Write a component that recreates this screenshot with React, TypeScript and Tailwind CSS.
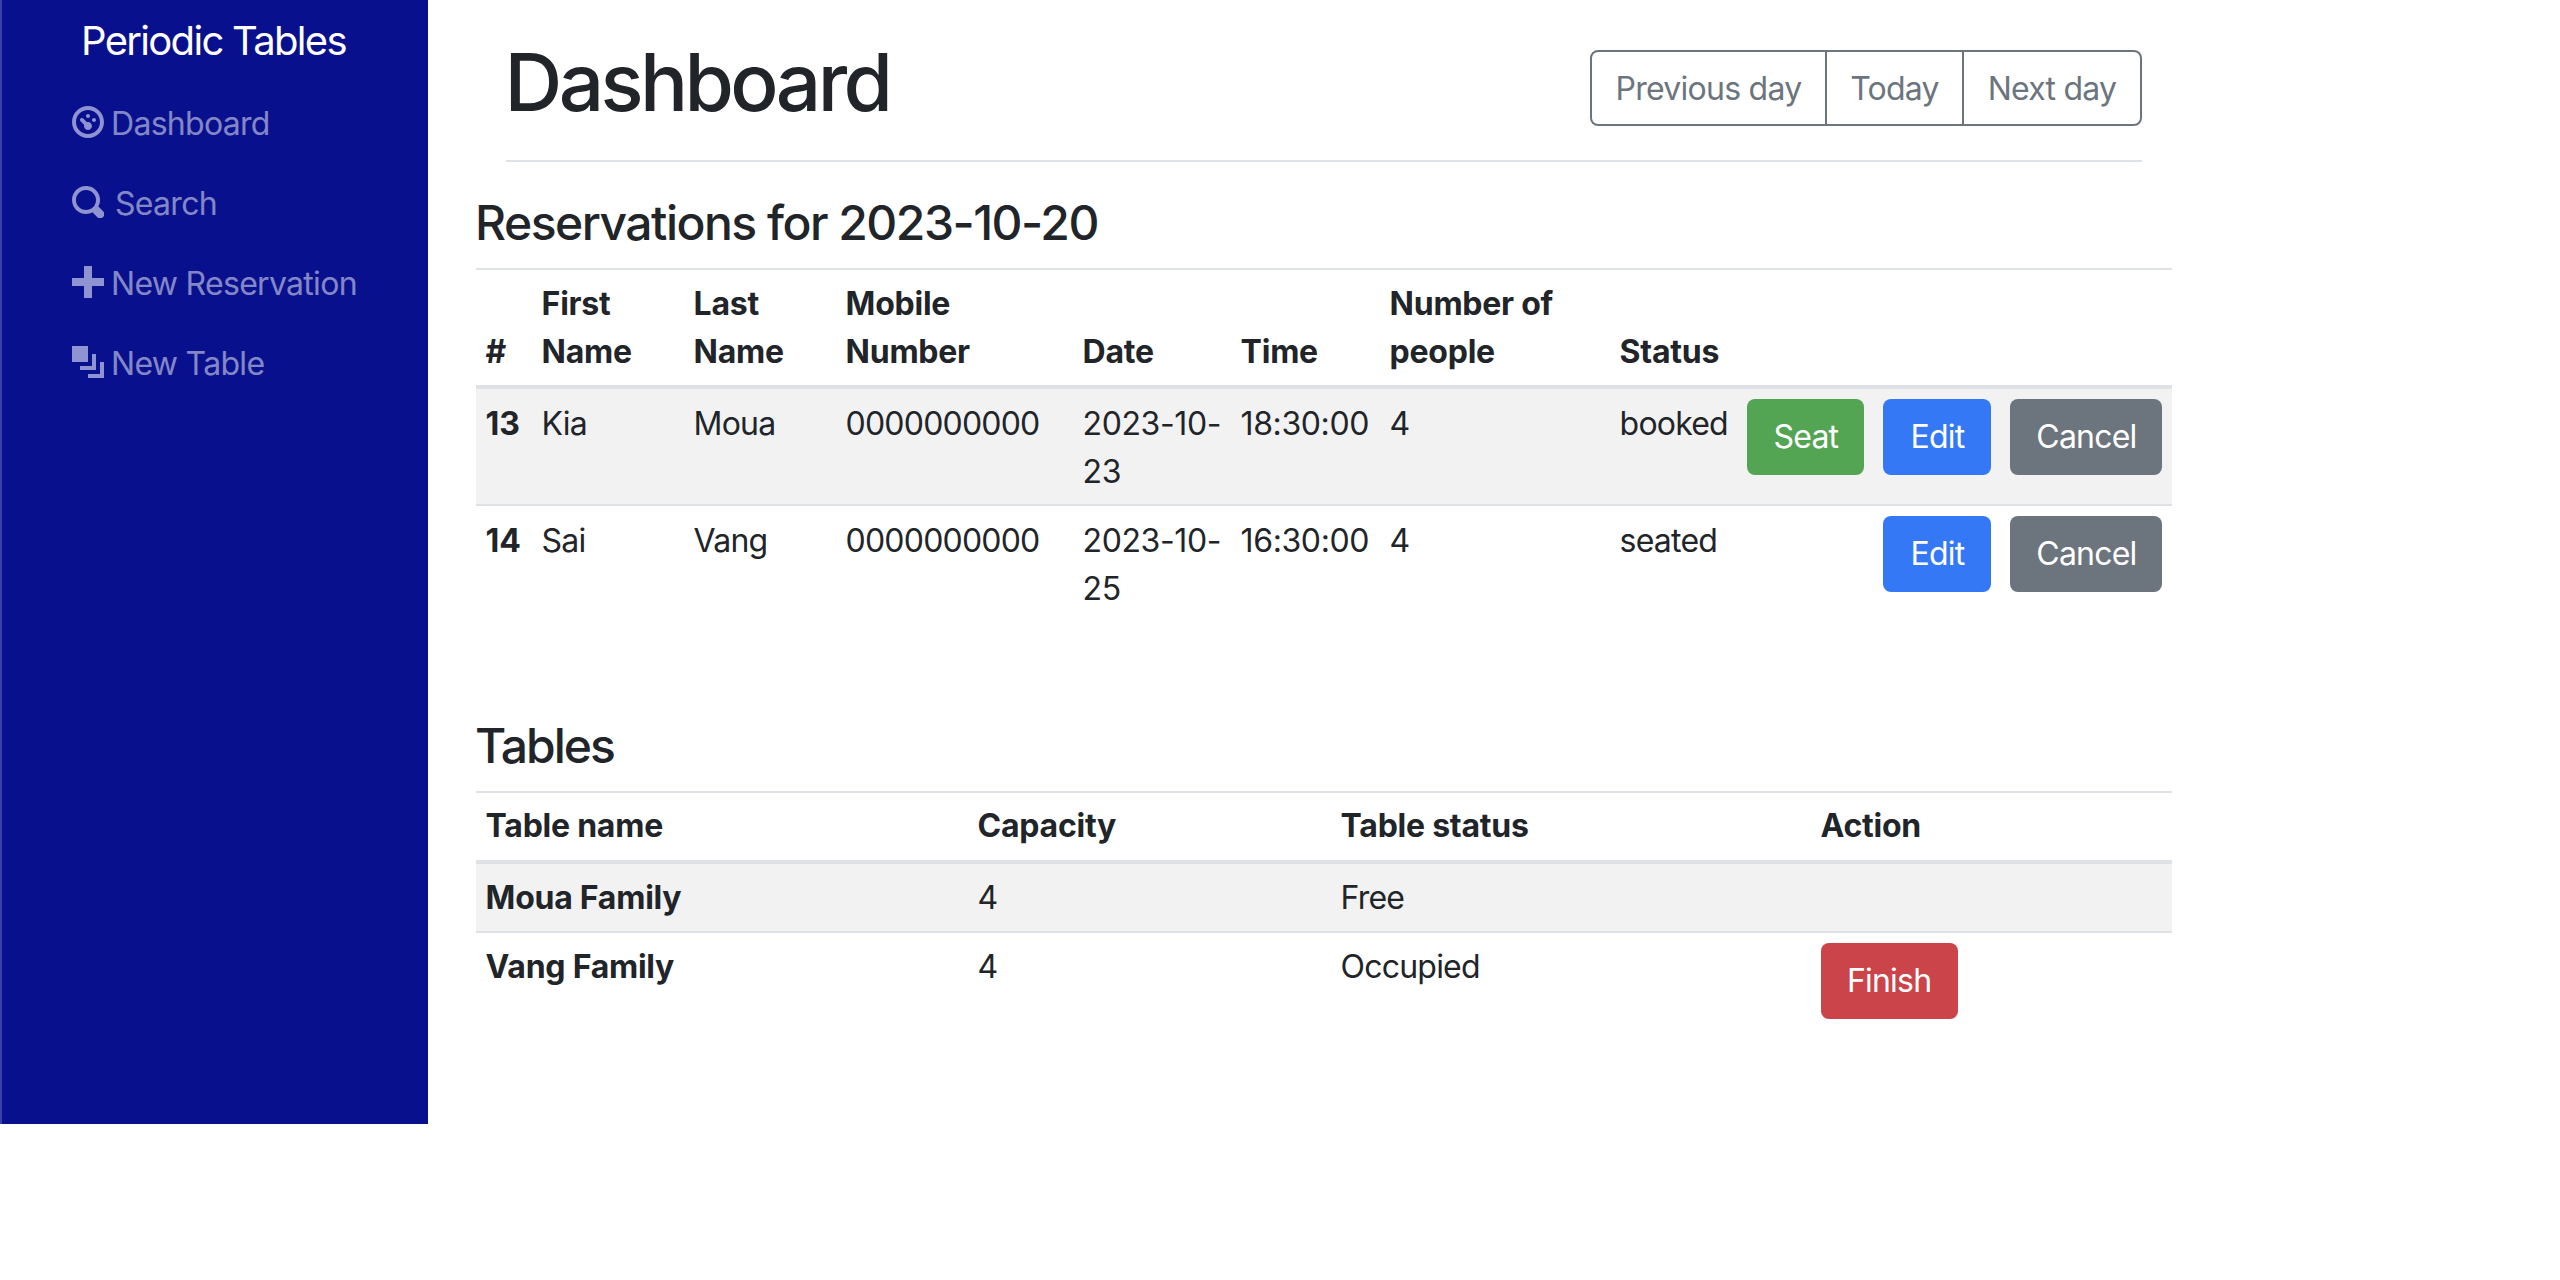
const nav = [
  { label: "Dashboard", textPad: "ml-[7px]", d: "M4 0c-2.2 0-4 1.8-4 4s1.8 4 4 4 4-1.8 4-4-1.8-4-4-4zm0 1c1.66 0 3 1.34 3 3s-1.34 3-3 3-3-1.34-3-3 1.34-3 3-3zm0 1c-.28 0-.5.22-.5.5s.22.5.5.5.5-.22.5-.5-.22-.5-.5-.5zm-1.66 1a.5.5 0 0 0-.19.84l.91.91c-.02.08-.06.16-.06.25 0 .55.45 1 1 1s1-.45 1-1-.45-1-1-1c-.09 0-.17.04-.25.06l-.91-.91a.5.5 0 0 0-.44-.16h-.06zm3.16 0c-.28 0-.5.22-.5.5s.22.5.5.5.5-.22.5-.5-.22-.5-.5-.5z" },
  { label: "Search", textPad: "ml-[11px]", d: "M3.5 0c-1.93 0-3.5 1.57-3.5 3.5s1.57 3.5 3.5 3.5c.59 0 1.17-.14 1.66-.41a1 1 0 0 0 .13.13l1 1a1.02 1.02 0 1 0 1.44-1.44l-1-1a1 1 0 0 0-.16-.13c.27-.49.44-1.06.44-1.66 0-1.93-1.57-3.5-3.5-3.5zm0 1c1.39 0 2.5 1.11 2.5 2.5 0 .66-.24 1.27-.66 1.72-.01.01-.02.02-.03.03a1 1 0 0 0-.13.13c-.44.4-1.04.63-1.69.63-1.39 0-2.5-1.11-2.5-2.5s1.11-2.5 2.5-2.5z" },
  { label: "New Reservation", textPad: "ml-[7px]", d: "M3 0v3h-3v2h3v3h2v-3h3v-2h-3v-3h-2z" },
  { label: "New Table", textPad: "ml-[7px]", d: "M0 0v4h4v-4h-4zm5 2v3h-3v1h4v-4h-1zm2 2v3h-3v1h4v-4h-1z" },
];

function Btn({ label, color, width }: { label: string; color: string; width: string }) {
  return (
    <button className={`h-[76px] ${width} ${color} rounded-[8px] text-white text-[32px] leading-[48px] text-center tracking-[-0.8px]`}>
      {label}
    </button>
  );
}

const th = "border-t-2 border-b-4 border-[#dee2e6] p-[9.6px] align-bottom text-left font-bold tracking-[-0.25px]";
const td = "border-t-2 border-[#dee2e6] pt-[10.4px] pb-[8.8px] px-[9.6px] align-top text-left font-normal tracking-[-0.8px]";
const td0 = "pt-[10.4px] pb-[8.8px] px-[9.6px] align-top text-left font-normal tracking-[-0.8px]";
const rowHead = "!font-bold !tracking-[-0.25px]";
const wide = "!tracking-[-0.4px] whitespace-nowrap";
const actions = "flex justify-end gap-[19px] -mt-[0.8px]";

export default function App() {
  return (
    <div className="flex items-start min-h-[1280px] bg-white text-[#212529] text-[32px] leading-[48px] font-['Inter',sans-serif]">
      <aside className="w-[428px] h-[1124px] shrink-0 bg-[#08108e] border-l-2 border-[#3b40a6]">
        <div className="h-[82px] flex items-center justify-center text-white text-[40px] leading-[60px] tracking-[-1.7px] pr-[3px]">
          Periodic Tables
        </div>
        <ul className="pl-[70px] pt-[2px]">
          {nav.map((n) => (
            <li key={n.label} className="h-[80px] flex items-center text-white/50 tracking-[-0.7px]">
              <svg viewBox="0 0 8 8" className="w-[32px] h-[32px] shrink-0 fill-current text-[#8f93d2] -mt-[4px]">
                <path d={n.d} />
              </svg>
              <span className={n.textPad}>{n.label}</span>
            </li>
          ))}
        </ul>
      </aside>

      <main className="w-[1696px] ml-[48px]">
        <div className="mx-[30px] h-[162px] border-b-2 border-[#dee2e6] flex items-start justify-between pt-[34px]">
          <h1 className="-ml-[1.5px] text-[80px] leading-[96px] font-[530] tracking-[-3.6px]">Dashboard</h1>
          <div className="mt-[16px] flex h-[76px] border-2 border-[#6c757d] rounded-[8px] text-[#6c757d] tracking-[-0.75px]">
            <div className="w-[233px] flex items-center justify-center pt-[2px]">Previous day</div>
            <div className="w-[137px] flex items-center justify-center pt-[2px] border-l-2 border-[#6c757d]">Today</div>
            <div className="w-[178px] flex items-center justify-center pt-[2px] border-l-2 border-[#6c757d]">Next day</div>
          </div>
        </div>

        <h4 className="-ml-[1px] mt-[32px] mb-[16px] text-[48px] leading-[58px] font-[530] tracking-[-1.5px]">Reservations for 2023-10-20</h4>
        <table className="w-full table-fixed border-separate border-spacing-0">
          <colgroup>
            <col className="w-[56px]" />
            <col className="w-[152px]" />
            <col className="w-[152px]" />
            <col className="w-[237px]" />
            <col className="w-[158px]" />
            <col className="w-[149px]" />
            <col className="w-[230px]" />
            <col className="w-[127px]" />
            <col />
          </colgroup>
          <thead>
            <tr>
              <th className={th}>#</th>
              <th className={th}>First Name</th>
              <th className={th}>Last Name</th>
              <th className={th}>Mobile Number</th>
              <th className={th}>Date</th>
              <th className={th}>Time</th>
              <th className={th}>Number of people</th>
              <th className={th}>Status</th>
              <th className={th}></th>
            </tr>
          </thead>
          <tbody>
            <tr className="bg-[#f2f2f2]">
              <th className={`${td0} ${rowHead}`}>13</th>
              <td className={td0}>Kia</td>
              <td className={td0}>Moua</td>
              <td className={td0}>0000000000</td>
              <td className={`${td0} ${wide}`}>2023-10-<br />23</td>
              <td className={`${td0} ${wide}`}>18:30:00</td>
              <td className={td0}>4</td>
              <td className={td0}>booked</td>
              <td className={td0}>
                <div className={actions}>
                  <Btn label="Seat" color="bg-[#53a553]" width="w-[117px]" />
                  <Btn label="Edit" color="bg-[#3578f6]" width="w-[108px]" />
                  <Btn label="Cancel" color="bg-[#6c757d]" width="w-[152px]" />
                </div>
              </td>
            </tr>
            <tr>
              <th className={`${td} ${rowHead}`}>14</th>
              <td className={td}>Sai</td>
              <td className={td}>Vang</td>
              <td className={td}>0000000000</td>
              <td className={`${td} ${wide}`}>2023-10-<br />25</td>
              <td className={`${td} ${wide}`}>16:30:00</td>
              <td className={td}>4</td>
              <td className={td}>seated</td>
              <td className={td}>
                <div className={actions}>
                  <Btn label="Edit" color="bg-[#3578f6]" width="w-[108px]" />
                  <Btn label="Cancel" color="bg-[#6c757d]" width="w-[152px]" />
                </div>
              </td>
            </tr>
          </tbody>
        </table>

        <h4 className="-ml-[1px] mt-[95px] mb-[16px] text-[48px] leading-[58px] font-[530] tracking-[-2px]">Tables</h4>
        <table className="w-full table-fixed border-separate border-spacing-0">
          <colgroup>
            <col className="w-[492px]" />
            <col className="w-[363px]" />
            <col className="w-[480px]" />
            <col />
          </colgroup>
          <thead>
            <tr>
              <th className={th}>Table name</th>
              <th className={th}>Capacity</th>
              <th className={th}>Table status</th>
              <th className={th}>Action</th>
            </tr>
          </thead>
          <tbody>
            <tr className="bg-[#f2f2f2]">
              <th className={`${td0} ${rowHead}`}>Moua Family</th>
              <td className={td0}>4</td>
              <td className={td0}>Free</td>
              <td className={td0}></td>
            </tr>
            <tr>
              <th className={`${td} ${rowHead}`}>Vang Family</th>
              <td className={td}>4</td>
              <td className={td}>Occupied</td>
              <td className={td}>
                <div className="-mt-[0.8px]">
                  <Btn label="Finish" color="bg-[#cb444a]" width="w-[137px]" />
                </div>
              </td>
            </tr>
          </tbody>
        </table>
      </main>
    </div>
  );
}
